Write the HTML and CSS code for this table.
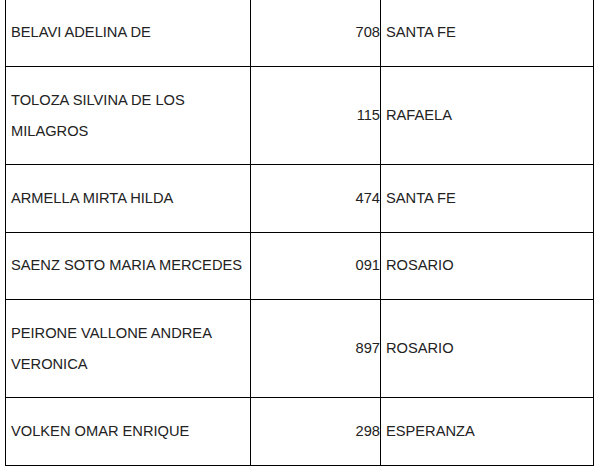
FILE: index.html
```html
<!DOCTYPE html>
<html lang="es">
<head>
<meta charset="utf-8">
<title>Listado</title>
<link rel="stylesheet" href="styles.css">
</head>
<body>
<table class="list">
  <colgroup>
    <col class="c-name">
    <col class="c-num">
    <col class="c-city">
  </colgroup>
  <tbody>
    <tr><td class="name">BELAVI ADELINA DE</td><td class="num">708</td><td class="city">SANTA FE</td></tr>
    <tr><td class="name">TOLOZA SILVINA DE LOS MILAGROS</td><td class="num">115</td><td class="city">RAFAELA</td></tr>
    <tr><td class="name">ARMELLA MIRTA HILDA</td><td class="num">474</td><td class="city">SANTA FE</td></tr>
    <tr><td class="name">SAENZ SOTO MARIA MERCEDES</td><td class="num">091</td><td class="city">ROSARIO</td></tr>
    <tr><td class="name">PEIRONE VALLONE ANDREA VERONICA</td><td class="num">897</td><td class="city">ROSARIO</td></tr>
    <tr><td class="name">VOLKEN OMAR ENRIQUE</td><td class="num">298</td><td class="city">ESPERANZA</td></tr>
  </tbody>
</table>
</body>
</html>
```

FILE: styles.css
```css
html, body {
  margin: 0;
  padding: 0;
  background: #ffffff;
}

body {
  font-family: "Liberation Sans", Arial, sans-serif;
  font-size: 14.67px;
  color: #222222;
}

.list {
  border-collapse: collapse;
  table-layout: fixed;
  width: 588px;
  margin: -1.4px 0 0 5px;
}

.c-name { width: 245px; }
.c-num { width: 130px; }
.c-city { width: 213px; }

.list td {
  border: 1px solid #000000;
  padding: 17.7px 5px;
  line-height: 31px;
  vertical-align: middle;
}

.list td.num {
  text-align: right;
  padding-right: 0;
}
```
